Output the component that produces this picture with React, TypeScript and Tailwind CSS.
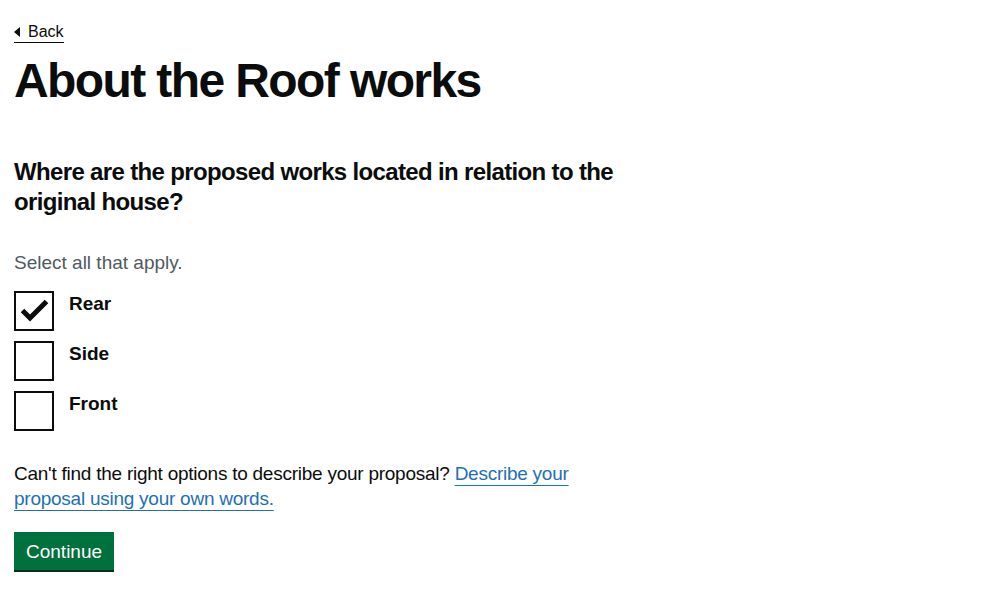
export default function App() {
  return (
    <div className="min-h-screen bg-white text-[#0b0c0c] font-['Liberation_Sans',Arial,sans-serif]">
      <div className="px-[14px] pt-[20px]">
        {/* Back link */}
        <a
          href="#"
          className="inline-flex items-center gap-[8px] text-[16px] leading-[20px] text-[#0b0c0c] border-b border-[#0b0c0c]"
        >
          <span className="inline-block w-0 h-0 border-y-[5px] border-y-transparent border-r-[6px] border-r-[#0b0c0c]" />
          Back
        </a>

        <h1 className="mt-[12px] text-[48px] leading-[50px] font-bold tracking-[-1.6px]">
          About the Roof works
        </h1>

        <div className="mt-[51px] w-[640px]">
          <h2 className="text-[24px] leading-[30px] font-bold tracking-[-0.65px]">
            Where are the proposed works located in relation to the original house?
          </h2>

          <p className="mt-[33px] text-[19px] leading-[25px] text-[#505a5f]">Select all that apply.</p>

          <div className="mt-[16px] flex flex-col gap-[10px]">
            {[
              { label: 'Rear', checked: true },
              { label: 'Side', checked: false },
              { label: 'Front', checked: false },
            ].map((o) => (
              <div key={o.label} className="flex items-start gap-[15px]">
                <div className="w-[40px] h-[40px] border-2 border-[#0b0c0c]">
                  {o.checked && (
                    <svg width="36" height="36" viewBox="0 0 36 36">
                      <path d="M6.5 17.5 L14 25 L30.5 8.5" fill="none" stroke="#0b0c0c" strokeWidth="5" />
                    </svg>
                  )}
                </div>
                <span className="text-[19px] leading-[25px] font-bold">{o.label}</span>
              </div>
            ))}
          </div>

          <p className="mt-[30px] w-[600px] text-[19px] leading-[25px] tracking-[-0.25px]">
            Can't find the right options to describe your proposal?{' '}
            <a href="#" className="text-[#1d70b8] underline underline-offset-[5px] decoration-[1px]">
              Describe your proposal using your own words.
            </a>
          </p>

          <button className="mt-[21px] bg-[#00703c] text-white text-[19px] leading-[19px] px-[12px] pt-[10px] pb-[9px] shadow-[0_2px_0_#002d18]">
            Continue
          </button>
        </div>
      </div>
    </div>
  );
}
